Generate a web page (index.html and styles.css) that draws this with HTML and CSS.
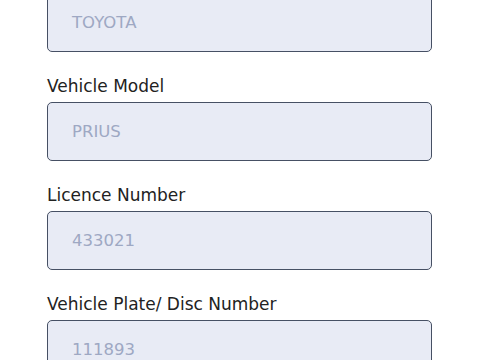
FILE: index.html
```html
<!DOCTYPE html>
<html>
<head>
<meta charset="utf-8">
<link rel="stylesheet" href="styles.css">
</head>
<body>
<form class="form">
  <div class="field first">
    <div class="box"><span class="value">TOYOTA</span></div>
  </div>
  <div class="field">
    <label class="label">Vehicle Model</label>
    <div class="box"><span class="value">PRIUS</span></div>
  </div>
  <div class="field">
    <label class="label">Licence Number</label>
    <div class="box"><span class="value">433021</span></div>
  </div>
  <div class="field">
    <label class="label">Vehicle Plate/ Disc Number</label>
    <div class="box"><span class="value">111893</span></div>
  </div>
</form>
</body>
</html>
```
FILE: styles.css
```css
html, body {
  margin: 0;
  padding: 0;
  background: #ffffff;
  width: 480px;
  height: 360px;
  overflow: hidden;
}
.form {
  display: flex;
  flex-direction: column;
  gap: 22px;
  margin: -7px 0 0 47px;
  width: 385px;
  font-family: "DejaVu Sans", "Noto Sans", sans-serif;
}
.field {
  display: flex;
  flex-direction: column;
}
.label {
  font-size: 17px;
  line-height: 24px;
  color: #222222;
  margin-bottom: 4px;
}
.box {
  box-sizing: border-box;
  height: 59px;
  border: 1.6px solid #465064;
  border-radius: 5px;
  background: #e8ebf5;
  display: flex;
  align-items: center;
  padding-left: 24px;
}
.value {
  font-size: 16.5px;
  color: #9ea8c3;
}
```
